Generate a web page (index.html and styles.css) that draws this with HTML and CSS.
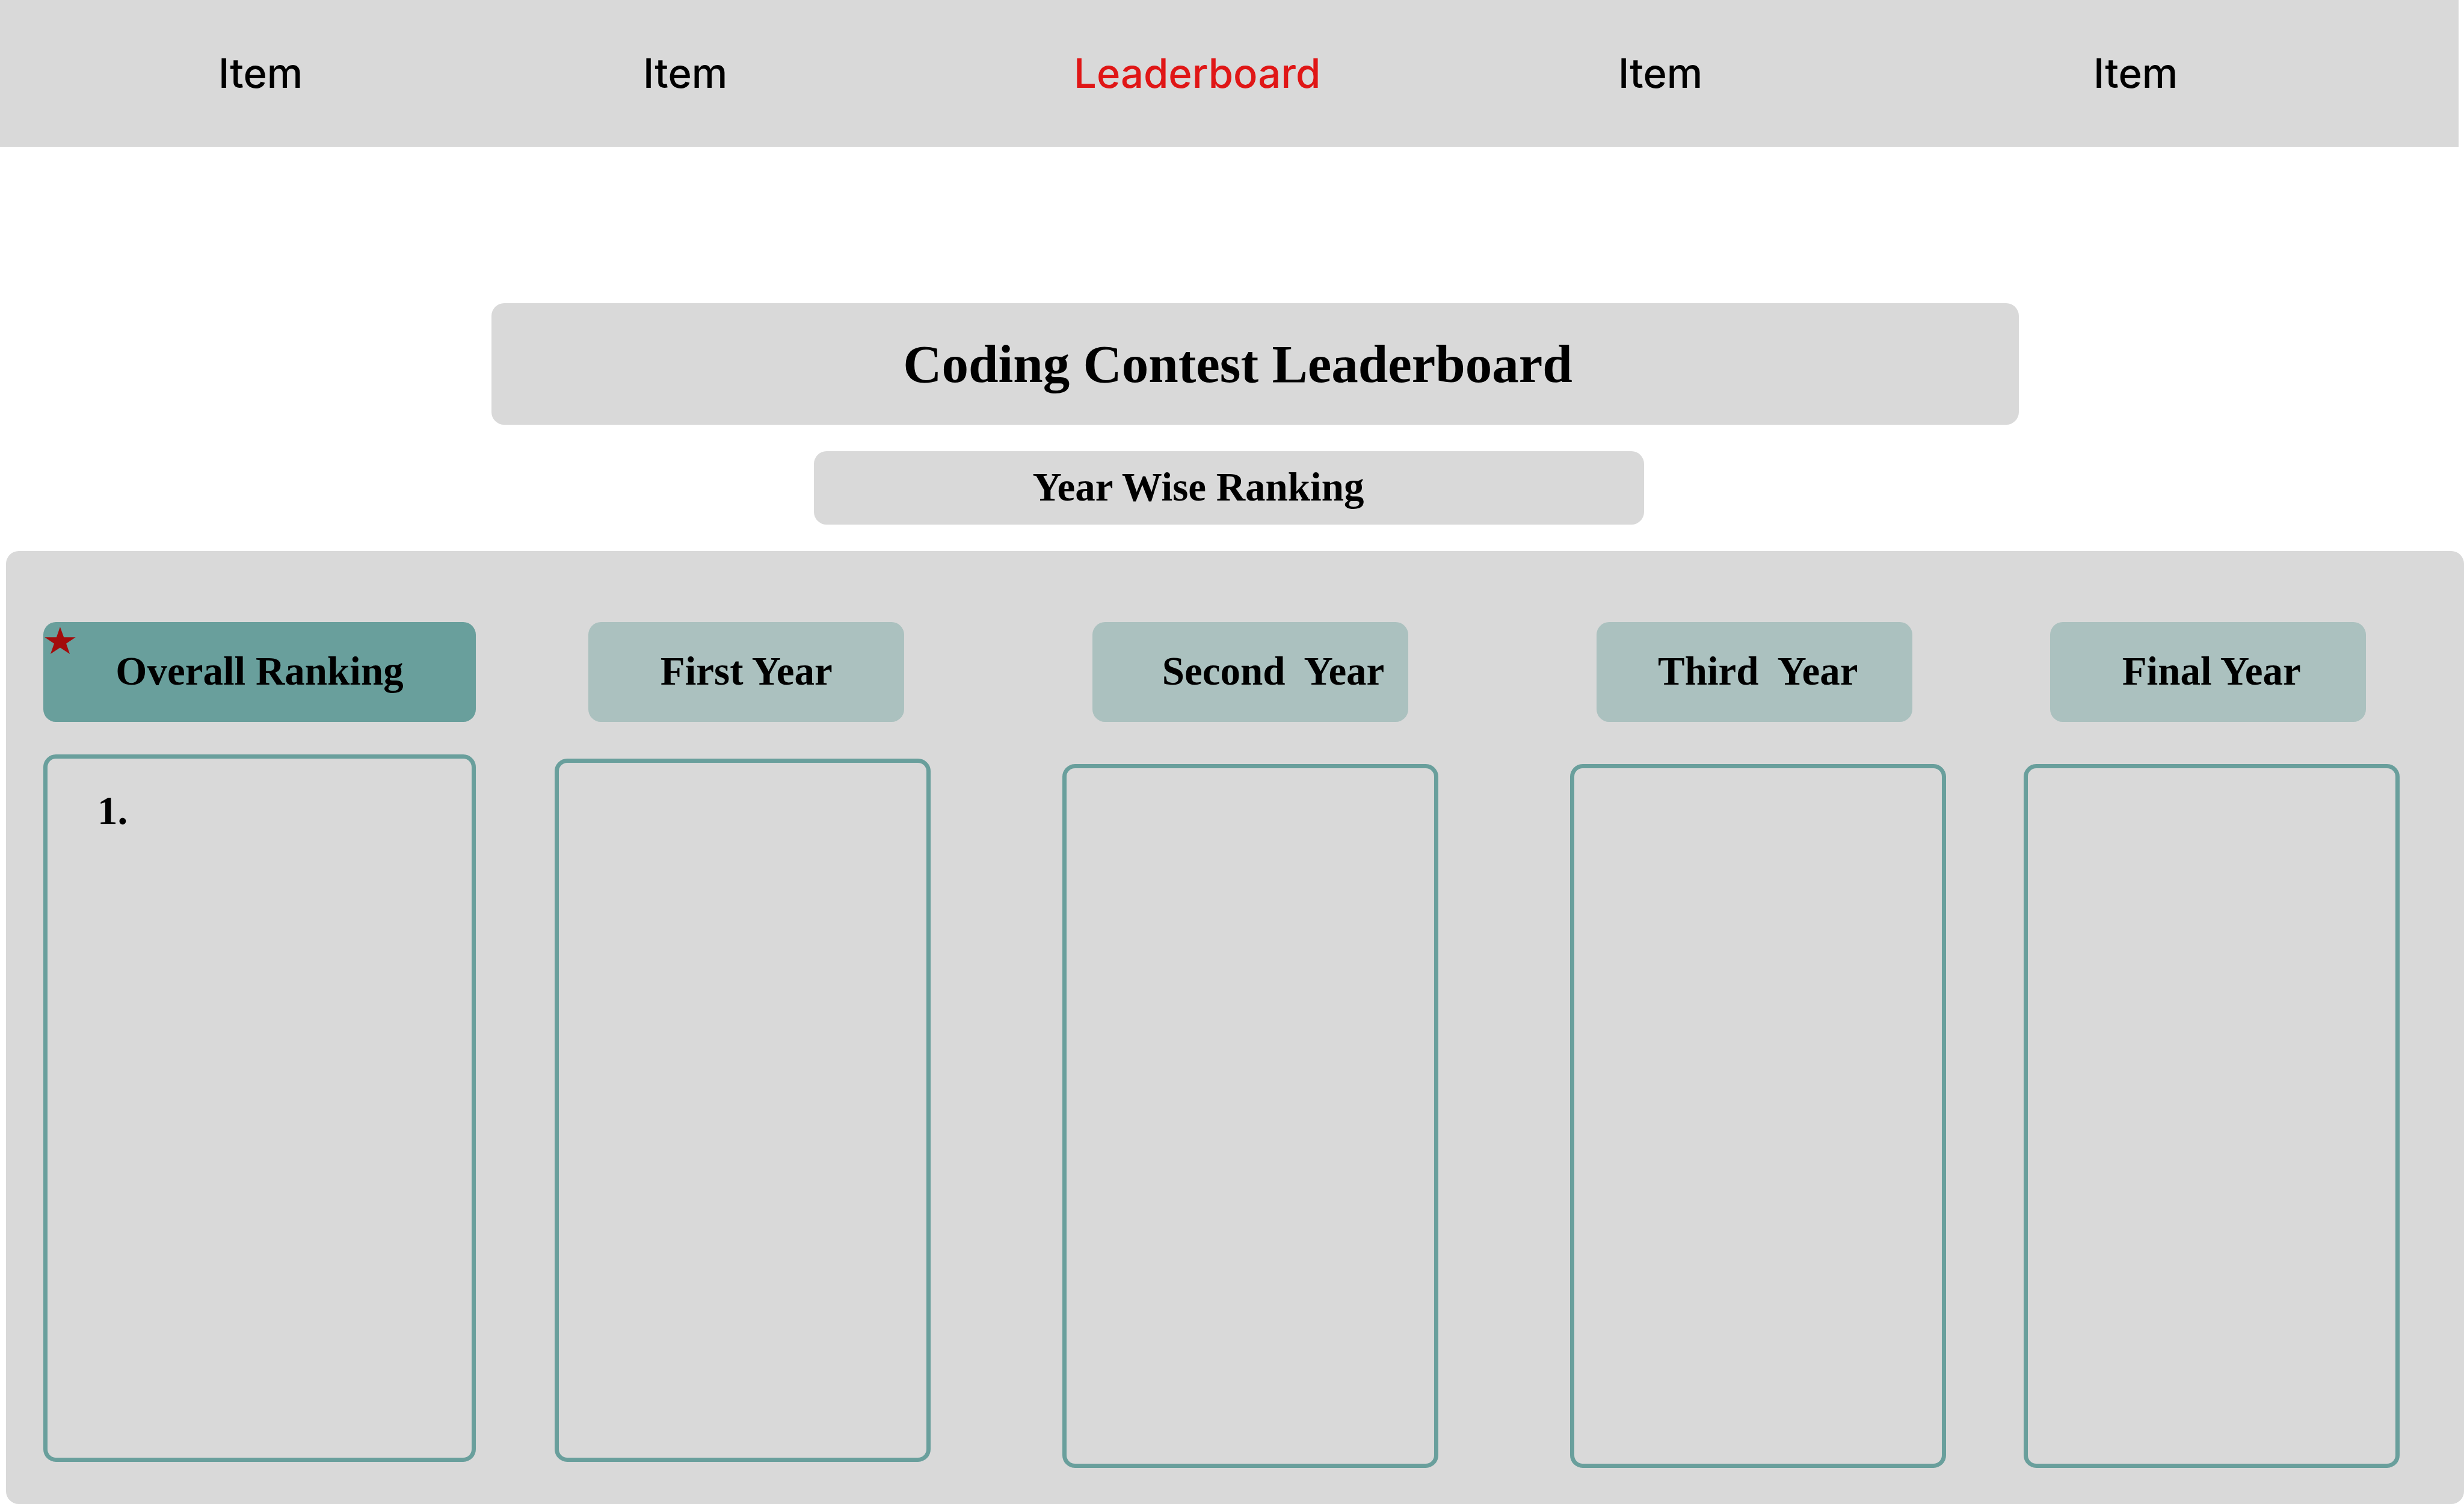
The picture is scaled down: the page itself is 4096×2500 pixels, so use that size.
FILE: index.html
```html
<!DOCTYPE html>
<html lang="en">
<head>
  <meta charset="utf-8">
  <meta name="viewport" content="width=device-width, initial-scale=1">
  <title>Coding Contest Leaderboard</title>
  <link rel="stylesheet" href="styles.css">
</head>
<body class="page">
  <nav class="nav" aria-label="Main">
    <a class="nav-link" href="#">Item</a>
    <a class="nav-link" href="#">Item</a>
    <a class="nav-link nav-link-current" href="#" aria-current="page">Leaderboard</a>
    <a class="nav-link" href="#">Item</a>
    <a class="nav-link" href="#">Item</a>
  </nav>

  <header class="heading">
    <h1 class="title">Coding Contest Leaderboard</h1>
    <p class="subtitle">Year Wise Ranking</p>
  </header>

  <main class="board">
    <section class="column column-overall">
      <h2 class="pill pill-overall">
        <svg class="star" viewBox="0 0 223 195" aria-hidden="true">
          <polygon points="111,0 138,75 223,75 155,120 181,195 111,149 42,195 68,120 0,75 85,75"/>
        </svg>
        Overall Ranking
      </h2>
      <ol class="list">
        <li>1.</li>
      </ol>
    </section>
    <section class="column column-first">
      <h2 class="pill">First Year</h2>
      <ol class="list"></ol>
    </section>
    <section class="column column-second">
      <h2 class="pill">Second&nbsp; Year</h2>
      <ol class="list"></ol>
    </section>
    <section class="column column-third">
      <h2 class="pill">Third&nbsp; Year</h2>
      <ol class="list"></ol>
    </section>
    <section class="column column-final">
      <h2 class="pill">Final Year</h2>
      <ol class="list"></ol>
    </section>
  </main>
</body>
</html>
```
FILE: styles.css
```css
* {
  box-sizing: border-box;
}

.page {
  display: flex;
  flex-direction: column;
  min-height: 100vh;
  margin: 0;
  background: #ffffff;
  color: #000000;
  font-family: "Liberation Serif", serif;
}

/* Navigation */

.nav {
  display: grid;
  grid-template-columns: 706fr 716fr 905fr 790fr 607fr;
  align-items: center;
  height: 244px;
  margin-right: 9px;
  padding-left: 363px;
  background: #d9d9d9;
}

.nav-link {
  justify-self: start;
  color: #000000;
  font-family: Inter, sans-serif;
  font-size: 67px;
  font-weight: 500;
  line-height: 80px;
  text-decoration: none;
}

.nav-link-current {
  color: #e01616;
}

/* Page heading */

.heading {
  display: grid;
  grid-template-columns: 817fr 536fr 1380fr 623fr 740fr;
  row-gap: 44px;
  padding: 260px 0 44px;
}

.title,
.subtitle {
  display: flex;
  align-items: center;
  justify-content: center;
  margin: 0;
  border-radius: 21px;
  background: #d9d9d9;
  font-weight: 700;
}

.title {
  grid-column: 2 / 5;
  height: 202px;
  padding-right: 58px;
  font-size: 89px;
  line-height: 102px;
}

.subtitle {
  grid-column: 3;
  height: 122px;
  padding: 0 102px 4px 0;
  font-size: 67px;
  line-height: 77px;
}

/* Ranking board */

.board {
  display: grid;
  flex: 1;
  grid-template-columns:
    62fr [overall] 719fr 131fr [first] 625fr 219fr [second] 625fr
    219fr [third] 625fr 129fr [final] 625fr 107fr;
  margin-left: 10px;
  padding: 118px 0 60px;
  border-radius: 21px;
  background: #d9d9d9;
}

.column {
  display: flex;
  flex-direction: column;
}

.column-overall {
  grid-column: overall;
  gap: 54px;
  padding-bottom: 10px;
}

.column-first {
  grid-column: first;
  gap: 61px;
  padding-bottom: 10px;
}

.column-second {
  grid-column: second;
  gap: 70px;
}

.column-third {
  grid-column: third;
  gap: 70px;
}

.column-final {
  grid-column: final;
  gap: 70px;
}

.pill {
  position: relative;
  display: flex;
  align-items: center;
  justify-content: center;
  width: 84%;
  height: 166px;
  margin: 0;
  padding-bottom: 4px;
  border-radius: 21px;
  background: #abc1bf;
  font-size: 67px;
  font-weight: 700;
  line-height: 77px;
  white-space: nowrap;
}

.pill-overall {
  width: 100%;
  background: #699f9c;
}

.column-first .pill {
  margin-left: 9%;
}

.column-second .pill {
  margin-left: 8%;
  padding-left: 76px;
}

.column-third .pill,
.column-final .pill {
  margin-left: 7%;
  padding-left: 12px;
}

.star {
  position: absolute;
  top: 8px;
  left: 2px;
  width: 52px;
  height: 45px;
  fill: #a30c0c;
}

.list {
  flex: 1;
  margin: 0;
  padding: 48px 83px;
  border: 7px solid #699f9c;
  border-radius: 21px;
  font-size: 67px;
  font-weight: 700;
  line-height: 77px;
  list-style: none;
}
```
